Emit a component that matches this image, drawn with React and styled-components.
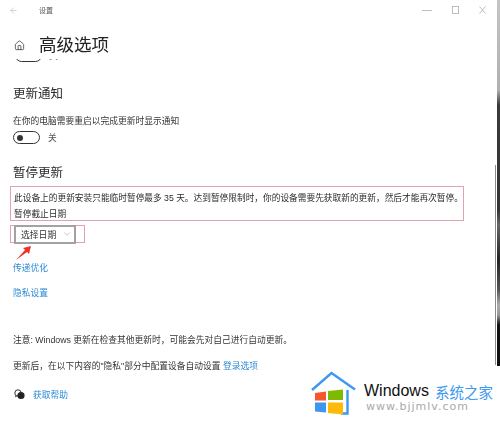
import React from 'react';
import styled, { createGlobalStyle } from 'styled-components';
import { ChevronDown, Home, ArrowLeft } from 'lucide-react';

const GlobalStyle = createGlobalStyle`
	html, body {
		margin: 0;
		padding: 0;
		background: #fff;
	}
	body {
		font-family: "Liberation Sans", "Noto Sans CJK SC", sans-serif;
		color: #2b2b2b;
	}
`;

const Page = styled.div`
	position: relative;
	width: 500px;
	height: 421px;
	overflow: hidden;
	background: #fff;
`;

const Softened = styled.div`
	filter: blur(0.3px);
`;

const TitleBar = styled.div`
	display: flex;
	align-items: center;
	height: 20px;
	padding: 0 14px 0 9px;
	font-size: 7px;
	color: #555;
`;

const TitleText = styled.span`
	margin-left: 21px;
	flex: 1;
`;

const WindowButtons = styled.div`
	display: flex;
	align-items: center;
	gap: 20px;
`;

const WindowGlyph = styled.svg`
	display: block;
	fill: none;
	stroke: #bdbdbd;
	stroke-width: 1;
`;

const Content = styled.main`
	padding: 13px 0 0 13px;
`;

const HeadingRow = styled.div`
	display: flex;
	align-items: center;
	height: 24px;
	gap: 14px;
	padding-left: 1px;
`;

const Heading = styled.h1`
	margin: 0;
	font-size: 17.5px;
	font-weight: 400;
	line-height: 24px;
	color: #222;
`;

const ClippedRow = styled.div`
	display: flex;
	align-items: flex-end;
	gap: 7px;
	height: 3px;
	margin-top: 2px;
	padding-left: 2px;
	overflow: hidden;
	color: #666;
	font-size: 9px;
`;

const SectionTitle = styled.h2`
	margin: ${(p) => p.$top}px 0 0;
	font-size: 12.5px;
	font-weight: 400;
	line-height: 16px;
	color: #2a2a2a;
`;

const BodyText = styled.p`
	margin: ${(p) => p.$top}px 0 0;
	font-size: 8.75px;
	line-height: 14px;
	color: #333;
	white-space: nowrap;
`;

const ToggleRow = styled.div`
	display: flex;
	align-items: center;
	gap: 8px;
	margin-top: 3px;
	font-size: 8.75px;
	color: #555;
`;

const Toggle = styled.span`
	display: inline-flex;
	align-items: center;
	flex: none;
	box-sizing: border-box;
	width: 27px;
	height: 13px;
	padding-left: 3px;
	border: 1.2px solid #333;
	border-radius: 7px;
	&::before {
		content: '';
		width: 6px;
		height: 6px;
		border-radius: 50%;
		background: #333;
	}
`;

const NoticeBox = styled.div`
	box-sizing: border-box;
	width: 454px;
	height: 35px;
	margin: 5px 0 0 -3px;
	padding: 3px 0 0 3px;
	border: 1px solid #e3a3ae;
`;

const NoticeLine = styled.p`
	margin: 0;
	font-size: 8.7px;
	line-height: 16px;
	color: #2b2b2b;
	white-space: nowrap;
`;

const SelectFrame = styled.div`
	display: flex;
	align-items: center;
	box-sizing: border-box;
	width: 75px;
	height: 18px;
	margin: 4px 0 0 -3px;
	padding-left: 3px;
	border: 1px solid #e3a3ae;
`;

const DateSelect = styled.div`
	display: flex;
	align-items: center;
	flex: none;
	box-sizing: border-box;
	width: 62px;
	height: 19px;
	padding-left: 5px;
	gap: 6px;
	border: 2px solid #a2a2a2;
	font-size: 8.8px;
	color: #333;
`;

const SettingsLink = styled.a`
	display: block;
	margin-top: ${(p) => p.$top}px;
	font-size: 8.75px;
	line-height: 14px;
	color: #2a8ad6;
`;

const InlineLink = styled.span`
	color: #2a8ad6;
`;

const HelpRow = styled.div`
	display: flex;
	align-items: center;
	gap: 8px;
	margin-top: 14px;
	padding-left: 1px;
	height: 14px;
`;

const HelpLink = styled.span`
	font-size: 8.75px;
	color: #2a8ad6;
`;

const PointerArrow = styled.svg`
	position: absolute;
	left: 14px;
	top: 244px;
`;

const ScrollEdge = styled.div`
	position: absolute;
	left: 495px;
	top: 165px;
	width: 1px;
	height: 200px;
	background: #8a8a8a;
`;

const DesktopEdge = styled.div`
	position: absolute;
	right: 0;
	top: 0;
	width: 3px;
	height: 100%;
	background: linear-gradient(
		#c4c4c4 0,
		#b0b0b0 90px,
		#3a3a3a 105px,
		#333 210px,
		#666 225px,
		#222 260px,
		#555 290px,
		#aaa 305px,
		#999 315px,
		#111 325px,
		#0c0c0c 100%
	);
`;

const Watermark = styled.div`
	position: absolute;
	left: 306px;
	top: 366px;
	width: 194px;
	height: 55px;
	display: flex;
	background: #fff;
`;

const WatermarkText = styled.div`
	display: flex;
	flex-direction: column;
	margin: 16px 0 0 6px;
`;

const WatermarkTitle = styled.div`
	display: flex;
	align-items: center;
	gap: 6px;
	height: 18px;
	white-space: nowrap;
`;

const WatermarkBrand = styled.span`
	font-family: "Liberation Sans", sans-serif;
	font-size: 16px;
	color: #111;
`;

const WatermarkCn = styled.span`
	font-size: 14.5px;
	color: #3b99f0;
`;

const WatermarkUrl = styled.div`
	margin-left: 2px;
	font-family: "DejaVu Sans", sans-serif;
	font-size: 11px;
	line-height: 14px;
	letter-spacing: 1px;
	color: #a9a9a9;
	white-space: nowrap;
`;

function HouseLogo() {
	return (
		<svg width="52" height="55" viewBox="306 366 52 55">
			<path
				d="M312 390 L331.5 373 L355 389.5 M347.5 390 V413.5 H341"
				fill="none"
				stroke="#3b99f0"
				strokeWidth="2.4"
			/>
			<path d="M315 393 L326 391.5 V400.5 H315 Z" fill="#f4572b" />
			<path d="M328 391 L343 389.5 V400 H328 Z" fill="#7fba00" />
			<path d="M315 402.5 H326 V412.5 L315 411.5 Z" fill="#3d97ee" />
			<path d="M328 402.5 H343 V414.5 L328 413 Z" fill="#ffba08" />
		</svg>
	);
}

function HelpIcon() {
	return (
		<svg width="11" height="11" viewBox="0 0 11 11">
			<circle cx="4" cy="4" r="3.2" fill="none" stroke="#333" strokeWidth="1" />
			<circle cx="7" cy="6.5" r="3.6" fill="#222" />
			<path d="M1.5 6.5 L1 8.5 L3 7.3" fill="#333" />
		</svg>
	);
}

export default function App() {
	return (
		<Page>
			<GlobalStyle />
			<Softened>
				<TitleBar>
					<ArrowLeft size={9} color="#aaa" strokeWidth={1.4} />
					<TitleText>设置</TitleText>
					<WindowButtons>
						<WindowGlyph width="10" height="8" viewBox="0 0 10 8">
							<path d="M0 4.5 H10" />
						</WindowGlyph>
						<WindowGlyph width="7" height="8" viewBox="0 0 7 8">
							<rect x="0.5" y="0.5" width="6" height="7" />
						</WindowGlyph>
						<WindowGlyph width="7" height="8" viewBox="0 0 7 8">
							<path d="M0.5 0.5 L6.5 7.5 M6.5 0.5 L0.5 7.5" />
						</WindowGlyph>
					</WindowButtons>
				</TitleBar>
				<Content>
					<HeadingRow>
						<Home size={11} color="#333" strokeWidth={1.6} />
						<Heading>高级选项</Heading>
					</HeadingRow>
					<ClippedRow>
						<Toggle />
						<span>关</span>
					</ClippedRow>
					<SectionTitle $top={24}>更新通知</SectionTitle>
					<BodyText $top={12}>在你的电脑需要重启以完成更新时显示通知</BodyText>
					<ToggleRow>
						<Toggle />
						<span>关</span>
					</ToggleRow>
					<SectionTitle $top={21}>暂停更新</SectionTitle>
					<NoticeBox>
						<NoticeLine>此设备上的更新安装只能临时暂停最多 35 天。达到暂停限制时，你的设备需要先获取新的更新，然后才能再次暂停。</NoticeLine>
						<NoticeLine>暂停截止日期</NoticeLine>
					</NoticeBox>
					<SelectFrame>
						<DateSelect>
							选择日期
							<ChevronDown size={10} color="#777" strokeWidth={1} />
						</DateSelect>
					</SelectFrame>
					<SettingsLink $top={18}>传递优化</SettingsLink>
					<SettingsLink $top={11}>隐私设置</SettingsLink>
					<BodyText $top={33}>注意: Windows 更新在检查其他更新时，可能会先对自己进行自动更新。</BodyText>
					<BodyText $top={12}>
						更新后，在以下内容的"隐私"部分中配置设备自动设置 <InlineLink>登录选项</InlineLink>
					</BodyText>
					<HelpRow>
						<HelpIcon />
						<HelpLink>获取帮助</HelpLink>
					</HelpRow>
				</Content>
				<PointerArrow width="18" height="18" viewBox="0 0 18 18">
					<path d="M2 16 L11 6 L9 4 L17 2 L15 10 L13 8 Z" fill="#f0302e" />
				</PointerArrow>
			</Softened>
			<ScrollEdge />
			<DesktopEdge />
			<Watermark>
				<HouseLogo />
				<WatermarkText>
					<WatermarkTitle>
						<WatermarkBrand>Windows</WatermarkBrand>
						<WatermarkCn>系统之家</WatermarkCn>
					</WatermarkTitle>
					<WatermarkUrl>www.bjjmlv.com</WatermarkUrl>
				</WatermarkText>
			</Watermark>
		</Page>
	);
}
